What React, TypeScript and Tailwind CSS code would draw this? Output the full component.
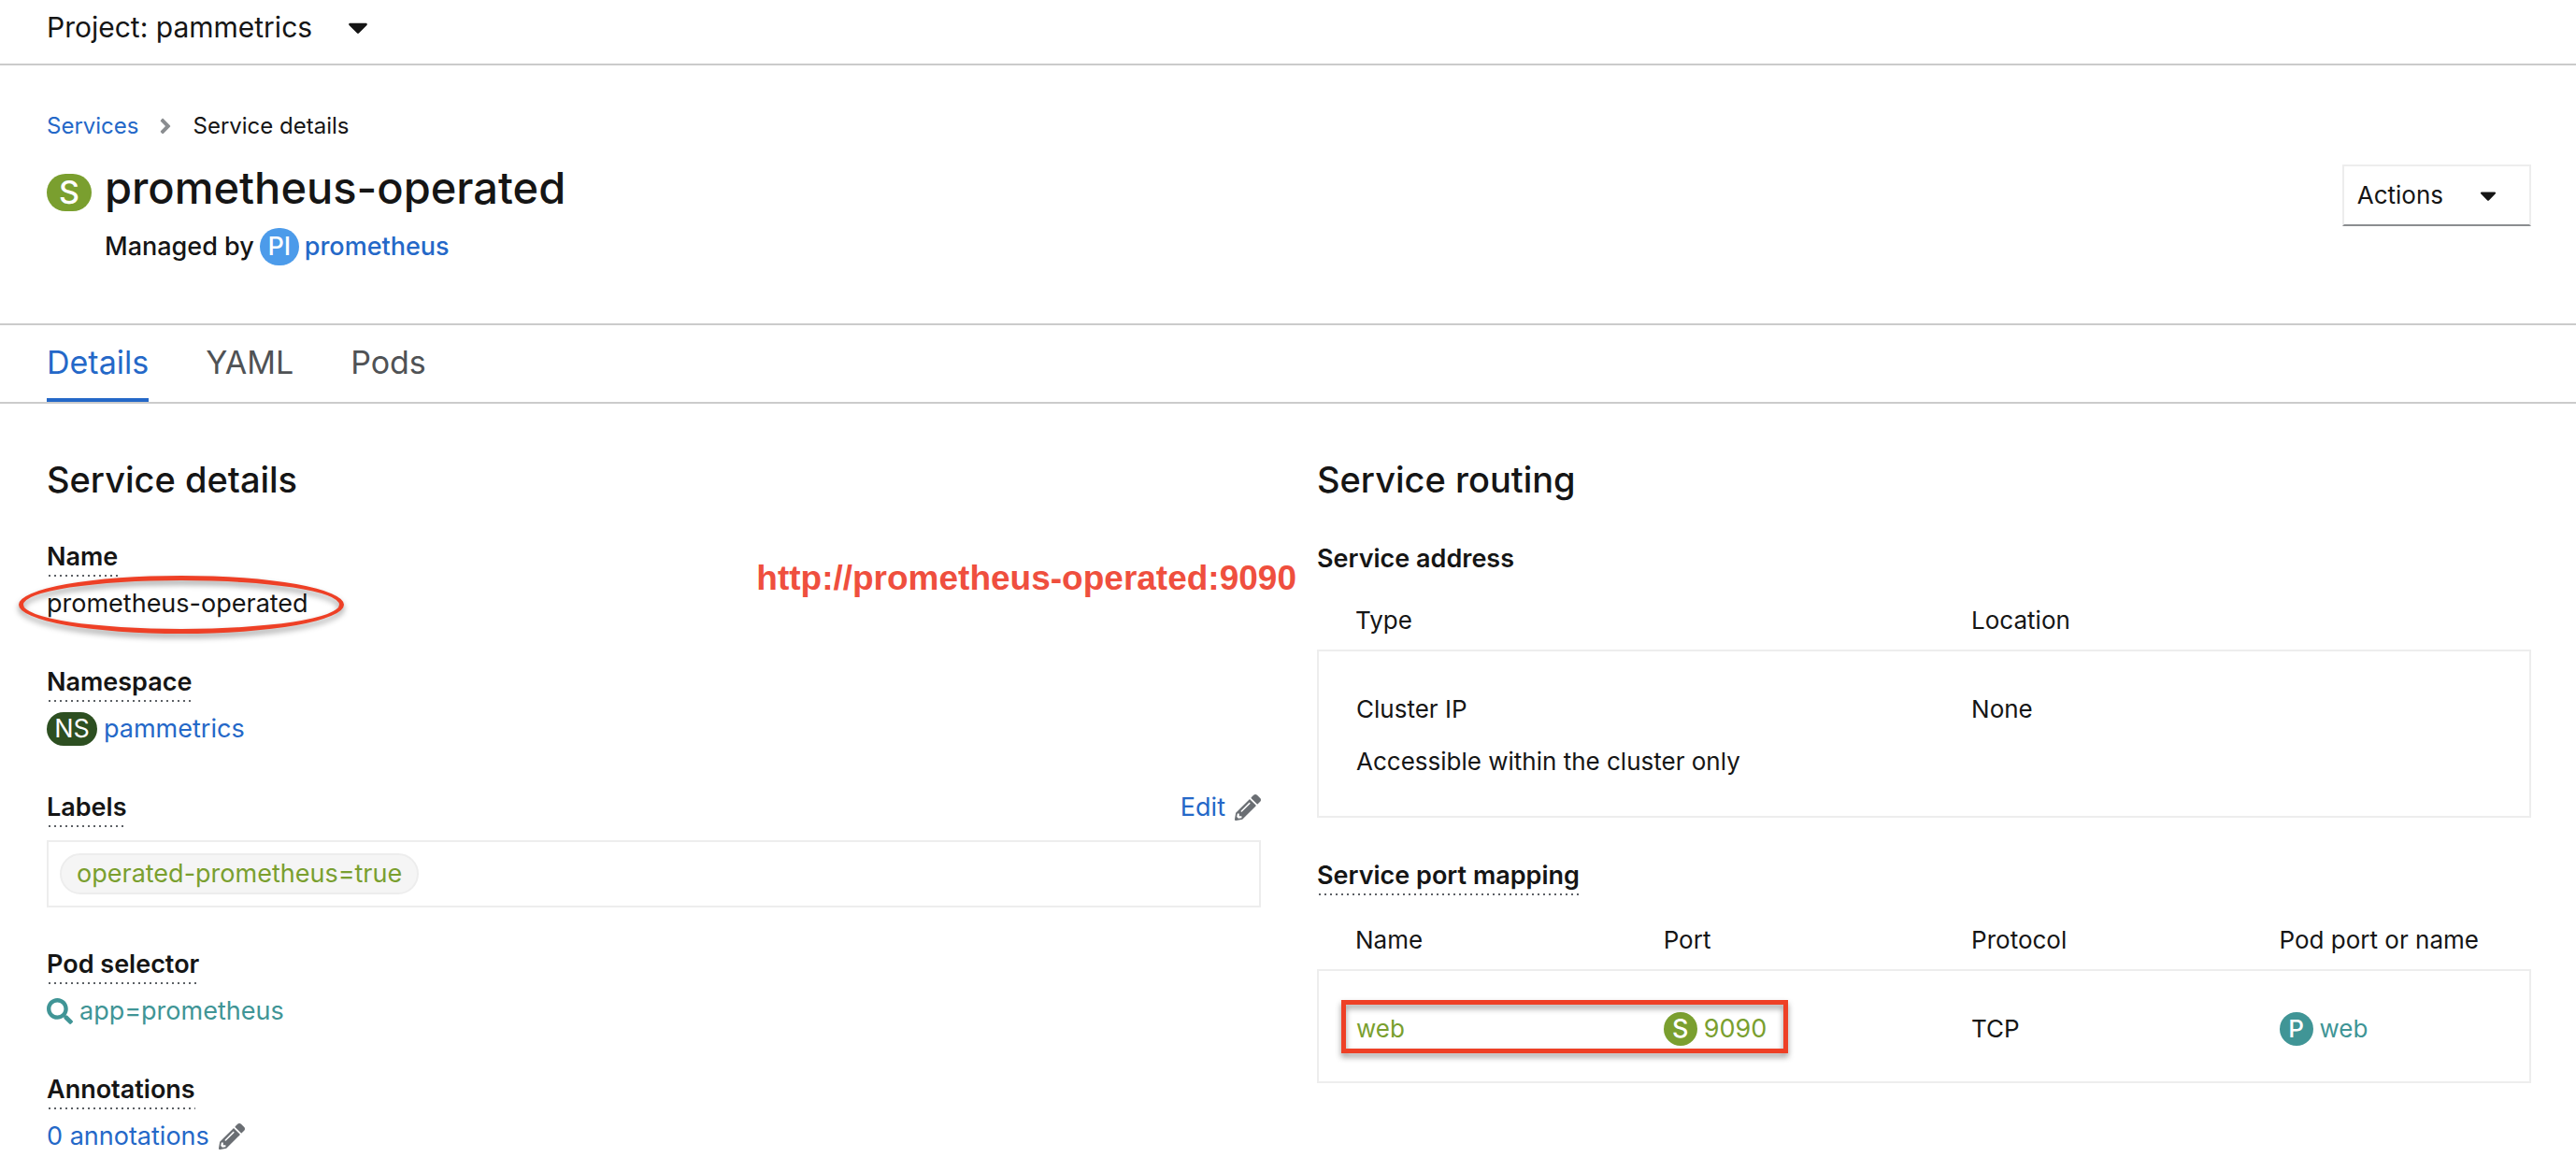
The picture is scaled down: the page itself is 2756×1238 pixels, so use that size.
import type { ReactNode } from "react";
import { FaAngleRight, FaCaretDown, FaPencilAlt, FaSearch } from "react-icons/fa";

const dotted =
  "w-fit pb-[3px] bg-[repeating-linear-gradient(to_right,transparent_0_2px,#5c6065_2px_4px,transparent_4px_6px)] bg-[length:100%_2px] bg-bottom bg-no-repeat";

function Badge({ text, className }: { text: string; className: string }) {
  return (
    <span className={`flex shrink-0 items-center justify-center text-white ${className}`}>{text}</span>
  );
}

function Field({ label, children, aside }: { label: string; children: ReactNode; aside?: ReactNode }) {
  return (
    <div>
      <div className="flex items-start justify-between">
        <dt className={`font-semibold ${dotted}`}>{label}</dt>
        {aside}
      </div>
      {children}
    </div>
  );
}

function ServiceDetails() {
  return (
    <section className="relative">
      <h2 className="text-[38px] leading-[50px] font-medium">Service details</h2>
      <dl className="mt-10 flex flex-col text-[27px] leading-9">
        <Field label="Name">
          <dd className="relative mt-[11px] mb-12 w-fit">
            prometheus-operated
            <span className="pointer-events-none absolute -top-3 -left-[30px] h-[62px] w-[348px] rounded-[50%] border-5 border-[#ee4026] drop-shadow-[0_4px_3px_rgba(0,0,0,0.4)]" />
          </dd>
        </Field>
        <Field label="Namespace">
          <dd className="mt-[11px] mb-12 flex items-center gap-[7px]">
            <Badge text="NS" className="h-9 w-[54px] rounded-[18px] bg-[#2d4f21]" />
            <a href="#namespace" className="text-[#2468c8]">pammetrics</a>
          </dd>
        </Field>
        <Field
          label="Labels"
          aside={
            <button type="button" className="flex items-center gap-[10px] text-[#2468c8]">
              Edit
              <FaPencilAlt className="size-7 text-[#6a6e73]" />
            </button>
          }
        >
          <dd className="mt-[14px] mb-[43px] flex border-2 border-[#ededed] px-3 py-3">
            <a
              href="#label"
              className="flex h-11 items-center rounded-[22px] border-2 border-[#ededed] bg-[#f5f5f5] px-4 text-[#7a9f2f]"
            >
              operated-prometheus=true
            </a>
          </dd>
        </Field>
        <Field label="Pod selector">
          <dd className="mt-[11px] mb-12">
            <a href="#selector" className="flex w-fit items-center gap-[7px] text-[#409596]">
              <FaSearch className="size-7" />
              app=prometheus
            </a>
          </dd>
        </Field>
        <Field label="Annotations">
          <dd className="mt-[11px]">
            <button type="button" className="flex items-center gap-[10px] text-[#2468c8]">
              0 annotations
              <FaPencilAlt className="size-7 text-[#6a6e73]" />
            </button>
          </dd>
        </Field>
      </dl>
      <p className="absolute top-[109px] -right-[38px] font-['Liberation_Sans',Arial,sans-serif] text-[37px] leading-11 font-bold whitespace-nowrap text-[#ef4f3e]">
        http://prometheus-operated:9090
      </p>
    </section>
  );
}

const th = "pt-[30px] pb-[13px] text-left font-normal first:pl-10";
const td = "pt-11 align-top first:pl-10";

function ServiceRouting() {
  return (
    <section>
      <h2 className="text-[38px] leading-[50px] font-medium">Service routing</h2>
      <h3 className="mt-[42px] text-[27px] leading-9 font-semibold">Service address</h3>
      <table className="w-full table-fixed border-collapse">
        <colgroup>
          <col className="w-[53.9%]" />
          <col />
        </colgroup>
        <thead>
          <tr>
            <th className={th}>Type</th>
            <th className={th}>Location</th>
          </tr>
        </thead>
        <tbody className="border-2 border-[#ededed]">
          <tr>
            <td className={`${td} pb-10`}>
              <p>Cluster IP</p>
              <p className="mt-5">Accessible within the cluster only</p>
            </td>
            <td className={td}>None</td>
          </tr>
        </tbody>
      </table>
      <h3 className={`mt-11 text-[27px] leading-9 font-semibold ${dotted}`}>Service port mapping</h3>
      <div className="relative">
        <table className="w-full table-fixed border-collapse">
          <colgroup>
            <col className="w-[28.5%]" />
            <col className="w-[25.4%]" />
            <col className="w-[25.4%]" />
            <col />
          </colgroup>
          <thead>
            <tr>
              <th className={th}>Name</th>
              <th className={th}>Port</th>
              <th className={th}>Protocol</th>
              <th className={th}>Pod port or name</th>
            </tr>
          </thead>
          <tbody className="border-2 border-[#ededed]">
            <tr>
              <td className={`${td} pb-[38px] text-[#7a9f2f]`}>web</td>
              <td className={`${td} text-[#7a9f2f]`}>
                <span className="flex items-center gap-[7px] text-[27px] leading-9">
                  <Badge text="S" className="size-9 rounded-full bg-[#7a9f2f] font-medium" />
                  9090
                </span>
              </td>
              <td className={td}>TCP</td>
              <td className={`${td} text-[#409596]`}>
                <span className="flex items-center gap-[7px]">
                  <Badge text="P" className="size-9 rounded-full bg-[#409596] font-medium" />
                  web
                </span>
              </td>
            </tr>
          </tbody>
        </table>
        <span className="pointer-events-none absolute bottom-8 left-[26px] h-[57px] w-[478px] border-5 border-[#ee4026] drop-shadow-[0_4px_3px_rgba(0,0,0,0.4)]" />
      </div>
    </section>
  );
}

const tab = "border-b-4 pt-5 pb-[18px] leading-10";

export default function App() {
  return (
    <div className="bg-white font-['Inter','Liberation_Sans',sans-serif] text-[26px] leading-9 text-[#151515]">
      <div className="border-b-2 border-[#cbcbcb] pt-[9px] pb-[19px] pl-[50px]">
        <button type="button" className="flex items-center gap-8 text-[30px] leading-10">
          Project: pammetrics
          <FaCaretDown className="size-[34px]" />
        </button>
      </div>

      <header className="border-b-2 border-[#cbcbcb] pt-[47px] pr-12 pb-[62px] pl-[50px]">
        <nav aria-label="Breadcrumb" className="flex items-center gap-4 text-2xl leading-9">
          <a href="#services" className="text-[#2468c8]">Services</a>
          <FaAngleRight className="size-[26px] text-[#8a8d90]" />
          <span>Service details</span>
        </nav>
        <div className="mt-[18px] flex items-start justify-between">
          <div>
            <h1 className="flex items-end gap-[14px] text-[47px] leading-[60px] font-medium">
              <Badge text="S" className="mb-[5px] h-10 w-12 rounded-[20px] bg-[#7a9f2f] text-[34px]" />
              prometheus-operated
            </h1>
            <div className="mt-[13px] flex items-center gap-1.5 pl-[62px] text-[27px] leading-9 font-medium">
              Managed by
              <Badge text="PI" className="h-10 w-[42px] rounded-[20px] bg-[#4c9bea]" />
              <a href="#prometheus" className="text-[#2468c8]">prometheus</a>
            </div>
          </div>
          <button
            type="button"
            className="mt-[5px] flex h-[66px] items-center gap-[34px] border-2 border-[#ededed] border-b-[#8a8d90] pr-[30px] pl-[14px]"
          >
            Actions
            <FaCaretDown className="size-7" />
          </button>
        </div>
      </header>

      <div role="tablist" className="flex gap-[61px] border-b-2 border-[#cbcbcb] pl-[50px] text-[34px]">
        <button type="button" role="tab" aria-selected="true" className={`${tab} border-[#2468c8] text-[#2468c8]`}>
          Details
        </button>
        <button type="button" role="tab" aria-selected="false" className={`${tab} border-transparent text-[#4f5255]`}>
          YAML
        </button>
        <button type="button" role="tab" aria-selected="false" className={`${tab} border-transparent text-[#4f5255]`}>
          Pods
        </button>
      </div>

      <main className="grid grid-cols-2 gap-[60px] pt-14 pr-12 pl-[50px]">
        <ServiceDetails />
        <ServiceRouting />
      </main>
    </div>
  );
}
